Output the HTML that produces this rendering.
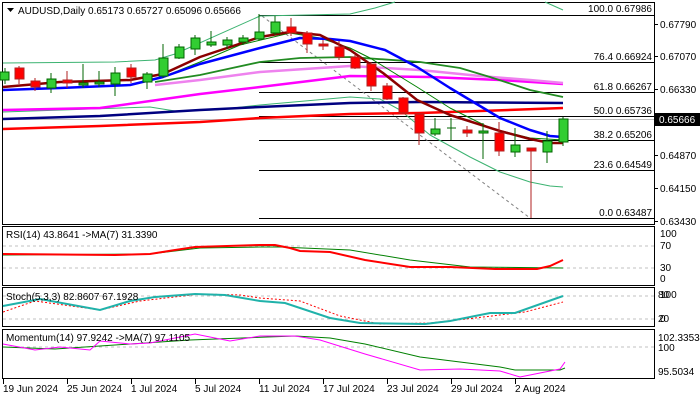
<!DOCTYPE html>
<html><head><meta charset="utf-8"><style>
html,body{margin:0;padding:0;background:#fff;width:700px;height:400px;overflow:hidden}
svg{display:block}
text{font-family:"Liberation Sans",sans-serif;font-size:10px}
</style></head><body>
<svg width="700" height="400" viewBox="0 0 700 400" xmlns="http://www.w3.org/2000/svg">
<rect width="700" height="400" fill="#fff"/>
<g fill="none" stroke="#000" stroke-width="1">
<rect x="2.5" y="2.5" width="652" height="222"/>
<rect x="2.5" y="226.5" width="652" height="59"/>
<rect x="2.5" y="287.5" width="652" height="39"/>
<rect x="2.5" y="329.5" width="652" height="49"/>
</g>
<g stroke="#000"><line x1="654" y1="24.5" x2="658" y2="24.5"/><line x1="654" y1="56.5" x2="658" y2="56.5"/><line x1="654" y1="89.5" x2="658" y2="89.5"/><line x1="654" y1="155.5" x2="658" y2="155.5"/><line x1="654" y1="188.5" x2="658" y2="188.5"/><line x1="654" y1="221.5" x2="658" y2="221.5"/></g>
<line x1="3" y1="119.5" x2="654" y2="119.5" stroke="#c0c0c0"/>
<g stroke="#000">
<line x1="259" y1="15.5" x2="654" y2="15.5"/>
<line x1="259" y1="62.5" x2="654" y2="62.5"/>
<line x1="259" y1="92.5" x2="654" y2="92.5"/>
<line x1="259" y1="116.5" x2="654" y2="116.5"/>
<line x1="259" y1="140.5" x2="654" y2="140.5"/>
<line x1="259" y1="170.5" x2="654" y2="170.5"/>
<line x1="259" y1="218.5" x2="654" y2="218.5"/>
</g>
<line x1="262" y1="16" x2="530" y2="218" stroke="#808080" stroke-dasharray="3,3"/>
<g fill="none" stroke-linejoin="round">
<polyline stroke="#3cb371" stroke-width="1" points="3,63 115,62 155,60 175,54 260,16 350,14 375,8 395,2"/>
<polyline stroke="#3cb371" stroke-width="1" points="545,2 563,10"/>
<polyline stroke="#3cb371" stroke-width="1" points="3,112 150,107 175,111 215,110 260,105 350,97 380,99 400,110 430,135 470,157 500,172 530,182 550,186 563,187"/>
<polyline stroke="#ff0000" stroke-width="2.5" points="3,129 100,126 200,122 260,118 350,114 420,113 480,111 563,108"/>
<polyline stroke="#000080" stroke-width="2.5" points="3,119 100,116 200,110 260,107 350,103 420,102 563,103"/>
<polyline stroke="#ff00ff" stroke-width="2.5" points="3,110 100,108 200,94 260,87 350,76 430,77 500,80 563,84"/>
<polyline stroke="#ee82ee" stroke-width="2.5" points="155,85 200,80 260,72 350,66 420,70 480,76 530,80 563,83"/>
<polyline stroke="#228b22" stroke-width="1.8" points="155,82 200,75 260,62 300,58 350,57 420,62 460,68 490,77 530,90 563,97"/>
<polyline stroke="#008000" stroke-width="1" points="165,76 200,62 240,45 290,33 320,38 350,48 370,58 417,87 450,108 490,128 530,138 563,140"/>
<polyline stroke="#0000ff" stroke-width="2.5" points="3,90 60,88 130,85 163,77 200,64 260,48 300,38 330,39 350,41 385,50 417,67 450,88 480,106 500,118 530,130 550,136 563,137"/>
<polyline stroke="#8b0000" stroke-width="2.5" points="3,87 60,82 130,80 163,74 200,57 260,37 290,32 320,35 350,50 383,73 417,100 450,115 500,131 530,139 550,143 563,143"/>
</g>
<g stroke-width="1">
<g stroke="#006400" fill="#32cd32">
<line x1="5" y1="68" x2="5" y2="84"/><rect x="0" y="72" width="9" height="8"/>
<line x1="51" y1="73" x2="51" y2="93"/><rect x="47" y="79" width="9" height="9"/>
<line x1="83" y1="64" x2="83" y2="88"/><rect x="79" y="83" width="9" height="2"/>
<line x1="99" y1="71" x2="99" y2="87"/><rect x="95" y="82" width="9" height="2"/>
<line x1="115" y1="67" x2="115" y2="96"/><rect x="111" y="73" width="9" height="11"/>
<line x1="147" y1="72" x2="147" y2="89"/><rect x="143" y="74" width="9" height="8"/>
<line x1="163" y1="44" x2="163" y2="78"/><rect x="159" y="58" width="9" height="18"/>
<line x1="179" y1="44" x2="179" y2="59"/><rect x="175" y="47" width="9" height="11"/>
<line x1="195" y1="35" x2="195" y2="55"/><rect x="191" y="38" width="9" height="11"/>
<line x1="211" y1="31" x2="211" y2="47"/><rect x="207" y="42" width="9" height="3"/>
<line x1="227" y1="37" x2="227" y2="49"/><rect x="223" y="40" width="9" height="5"/>
<line x1="243" y1="35" x2="243" y2="45"/><rect x="239" y="38" width="9" height="4"/>
<line x1="259" y1="14" x2="259" y2="40"/><rect x="255" y="32" width="9" height="7"/>
<line x1="275" y1="16" x2="275" y2="35"/><rect x="271" y="22" width="9" height="11"/>
<line x1="435" y1="118" x2="435" y2="136"/><rect x="431" y="129" width="9" height="5"/>
<line x1="451" y1="118" x2="451" y2="140"/><line x1="447" y1="128" x2="456" y2="128"/>
<line x1="483" y1="123" x2="483" y2="159"/><rect x="479" y="131" width="9" height="2"/>
<line x1="515" y1="128" x2="515" y2="157"/><rect x="511" y="145" width="9" height="7"/>
<line x1="547" y1="131" x2="547" y2="163"/><rect x="543" y="141" width="9" height="11"/>
<line x1="563" y1="117" x2="563" y2="146"/><rect x="559" y="119" width="9" height="23"/>
</g>
<g stroke="#b22222" fill="#ff0000">
<line x1="19" y1="66" x2="19" y2="84"/><rect x="15" y="68" width="9" height="11"/>
<line x1="35" y1="78" x2="35" y2="91"/><rect x="31" y="81" width="9" height="6"/>
<line x1="67" y1="71" x2="67" y2="88"/><rect x="63" y="80" width="9" height="3"/>
<line x1="131" y1="64" x2="131" y2="83"/><rect x="127" y="68" width="9" height="9"/>
<line x1="291" y1="18" x2="291" y2="36"/><rect x="287" y="27" width="9" height="6"/>
<line x1="307" y1="31" x2="307" y2="53"/><rect x="303" y="33" width="9" height="11"/>
<line x1="323" y1="40" x2="323" y2="50"/><rect x="319" y="44" width="9" height="2"/>
<line x1="339" y1="41" x2="339" y2="60"/><rect x="335" y="47" width="9" height="10"/>
<line x1="355" y1="55" x2="355" y2="69"/><rect x="351" y="57" width="9" height="11"/>
<line x1="371" y1="62" x2="371" y2="91"/><rect x="367" y="64" width="9" height="22"/>
<line x1="387" y1="83" x2="387" y2="100"/><rect x="383" y="86" width="9" height="13"/>
<line x1="403" y1="97" x2="403" y2="114"/><rect x="399" y="98" width="9" height="15"/>
<line x1="419" y1="113" x2="419" y2="145"/><rect x="415" y="114" width="9" height="19"/>
<line x1="467" y1="126" x2="467" y2="137"/><rect x="463" y="130" width="9" height="3"/>
<line x1="499" y1="122" x2="499" y2="156"/><rect x="495" y="133" width="9" height="18"/>
<line x1="531" y1="148" x2="531" y2="218"/><rect x="527" y="148" width="9" height="3"/>
</g>
</g>
<polygon points="7,8 14,8 10.5,12" fill="#000"/>
<text x="18" y="14" fill="#000">AUDUSD,Daily  0.65173 0.65727 0.65096 0.65666</text>
<g fill="#000" text-anchor="end">
<text x="652" y="12">100.0 0.67986</text>
<text x="652" y="60">76.4 0.66924</text>
<text x="652" y="90">61.8 0.66267</text>
<text x="652" y="114">50.0 0.65736</text>
<text x="652" y="138">38.2 0.65206</text>
<text x="652" y="168">23.6 0.64549</text>
<text x="652" y="216">0.0 0.63487</text>
</g>
<g fill="#000">
<text x="660" y="28">0.67790</text>
<text x="660" y="60">0.67070</text>
<text x="660" y="93">0.66330</text>
<text x="660" y="159">0.64870</text>
<text x="660" y="192">0.64150</text>
<text x="660" y="225">0.63430</text>
</g>
<rect x="655" y="113" width="45" height="13" fill="#000"/>
<text x="659" y="123" fill="#fff">0.65666</text>
<g stroke="#c0c0c0" stroke-dasharray="3,3"><line x1="3" y1="246" x2="654" y2="246"/><line x1="3" y1="268" x2="654" y2="268"/>
<line x1="3" y1="296" x2="654" y2="296"/><line x1="3" y1="319" x2="654" y2="319"/><line x1="3" y1="347" x2="654" y2="347"/></g>
<polyline fill="none" stroke="#008000" stroke-width="1" points="3,255 150,254 200,248 260,247 280,247 350,250 410,260 470,267 563,268"/>
<polyline fill="none" stroke="#ff0000" stroke-width="2" points="3,254 115,255 150,254 175,250 195,247 260,245 275,245 290,248 300,251 330,252 365,260 410,267 450,267 495,269 537,269 550,266 563,260"/>
<text x="6" y="238" fill="#000">RSI(14) 43.8641  -&gt;MA(7) 31.3390</text>
<g fill="#000"><text x="660" y="237">100</text><text x="660" y="249">70</text><text x="660" y="271">30</text><text x="660" y="282">0</text></g>
<polyline fill="none" stroke="#ff0000" stroke-width="1" stroke-dasharray="2,2" points="3,312 35,301 100,310 140,301 200,294 240,295 260,298 300,301 340,316 380,324 430,323 475,318 525,312 563,302"/>
<polyline fill="none" stroke="#20b2aa" stroke-width="2" points="3,306 40,299 100,310 130,301 155,297 195,294 225,295 260,301 285,303 330,318 360,323 425,324 450,321 490,313 515,313 563,296"/>
<text x="6" y="300" fill="#000">Stoch(5,3,3) 82.8607 67.1928</text>
<g fill="#000"><text x="658" y="298">80</text><text x="660" y="298">100</text><text x="658" y="322">20</text><text x="660" y="322">0</text></g>
<polyline fill="none" stroke="#008000" stroke-width="1" points="3,347 55,349 160,342 190,340 295,336 330,338 365,344 420,357 500,367 515,370 560,370 565,368"/>
<polyline fill="none" stroke="#ff00ff" stroke-width="1" points="3,344 35,350 60,347 90,350 100,341 130,344 150,343 195,334 230,341 260,336 295,336 320,340 365,354 420,370 460,369 500,371 520,377 560,369 565,362"/>
<text x="6" y="341" fill="#000">Momentum(14) 97.9242  -&gt;MA(7) 97.1105</text>
<g fill="#000"><text x="658" y="341">102.3353</text><text x="658" y="351">100</text><text x="658" y="375">95.5034</text></g>
<g stroke="#000"><line x1="3.5" y1="379" x2="3.5" y2="384"/><line x1="67.5" y1="379" x2="67.5" y2="384"/><line x1="131.5" y1="379" x2="131.5" y2="384"/><line x1="195.5" y1="379" x2="195.5" y2="384"/><line x1="259.5" y1="379" x2="259.5" y2="384"/><line x1="323.5" y1="379" x2="323.5" y2="384"/><line x1="387.5" y1="379" x2="387.5" y2="384"/><line x1="451.5" y1="379" x2="451.5" y2="384"/><line x1="515.5" y1="379" x2="515.5" y2="384"/></g>
<g fill="#000">
<text x="3" y="392">19 Jun 2024</text>
<text x="67" y="392">25 Jun 2024</text>
<text x="131" y="392">1 Jul 2024</text>
<text x="195" y="392">5 Jul 2024</text>
<text x="259" y="392">11 Jul 2024</text>
<text x="323" y="392">17 Jul 2024</text>
<text x="387" y="392">23 Jul 2024</text>
<text x="451" y="392">29 Jul 2024</text>
<text x="515" y="392">2 Aug 2024</text>
</g>
</svg>
</body></html>
